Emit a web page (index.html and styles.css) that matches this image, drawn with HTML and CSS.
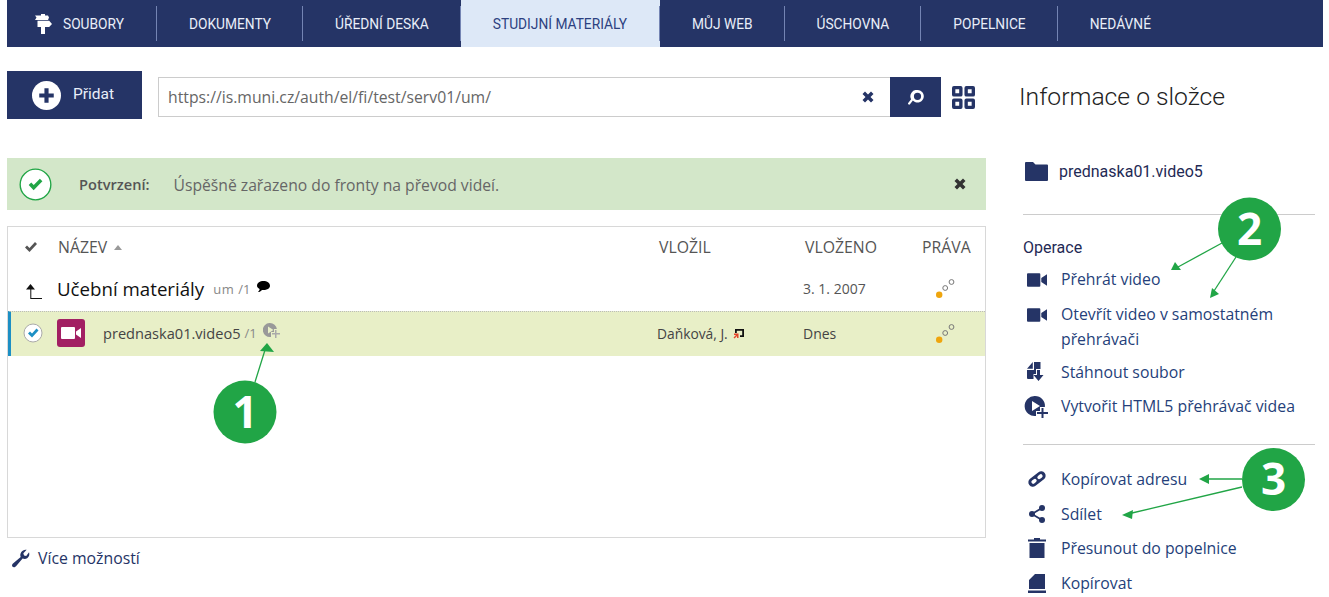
FILE: index.html
```html
<!DOCTYPE html>
<html lang="cs">
<head>
<meta charset="utf-8">
<title>Učební materiály</title>
<link rel="stylesheet" href="styles.css">
</head>
<body>
<div class="page">
  <nav class="nav">
    <a class="tab tab-first"><svg class="tab-icon" viewBox="0 0 17 20"><path d="M6 0h4v1.500h3l1 2-1 2.500H0L1.500 3.500 0 1.500h6zM2.500 6.800h11.700L17 10l-2.800 3H10v7H6v-7H2.500z"/></svg>SOUBORY</a>
    <a class="tab">DOKUMENTY</a>
    <a class="tab">ÚŘEDNÍ DESKA</a>
    <a class="tab tab-active">STUDIJNÍ MATERIÁLY</a>
    <a class="tab">MŮJ WEB</a>
    <a class="tab">ÚSCHOVNA</a>
    <a class="tab">POPELNICE</a>
    <a class="tab tab-last">NEDÁVNÉ</a>
  </nav>
  <div class="columns">
    <main class="main">
      <div class="toolbar">
        <button class="add"><svg class="add-icon" viewBox="0 0 28 28"><circle cx="14" cy="14" r="14" fill="#fff"/><path d="M12 7h4v5h5v4h-5v5h-4v-5H7v-4h5z" fill="#253466"/></svg>Přidat</button>
        <div class="search">
          <div class="url"><span>https://is.muni.cz/auth/el/fi/test/serv01/um/</span><svg class="x x-navy" viewBox="0 0 12 12"><path d="M3 .5 6 3.500 9 .5 11.500 3 8.500 6l3 3L9 11.500l-3-3-3 3L.5 9l3-3-3-3z"/></svg></div>
          <button class="go"><svg class="go-icon" viewBox="0 0 17 15"><path fill-rule="evenodd" d="M10.500 0a6.300 6.300 0 1 1-4.600 10.600L3 14.300c-.9 1-2.600-.3-1.800-1.400l2.900-3.700A6.300 6.300 0 0 1 10.500 0zm0 2.700a3.600 3.600 0 1 0 0 7.200 3.600 3.600 0 0 0 0-7.200z"/></svg></button>
          <svg class="grid-icon" viewBox="0 0 24 24"><path fill-rule="evenodd" d="M2 0h7a2 2 0 0 1 2 2v7a2 2 0 0 1-2 2H2a2 2 0 0 1-2-2V2a2 2 0 0 1 2-2zm1.500 3.500v4h4v-4zM15 0h7a2 2 0 0 1 2 2v7a2 2 0 0 1-2 2h-7a2 2 0 0 1-2-2V2a2 2 0 0 1 2-2zm1.500 3.500v4h4v-4zM2 13h7a2 2 0 0 1 2 2v7a2 2 0 0 1-2 2H2a2 2 0 0 1-2-2v-7a2 2 0 0 1 2-2zm1.500 3.500v4h4v-4zM15 13h7a2 2 0 0 1 2 2v7a2 2 0 0 1-2 2h-7a2 2 0 0 1-2-2v-7a2 2 0 0 1 2-2zm1.500 3.500v4h4v-4z"/></svg>
        </div>
      </div>

      <div class="alert">
        <svg class="alert-icon" viewBox="0 0 34 34"><circle cx="17" cy="17" r="15.800" fill="#fff" stroke="#21a546" stroke-width="1.400"/><path d="M10 17.500l2.600-2.600 2.600 2.600L21.500 11l2.600 2.600-9 9.400z" fill="#21a546"/></svg>
        <strong class="alert-label">Potvrzení:</strong>
        <span class="alert-text">Úspěšně zařazeno do fronty na převod videí.</span>
        <svg class="x x-dark" viewBox="0 0 12 12"><path d="M3 .5 6 3.500 9 .5 11.500 3 8.500 6l3 3L9 11.500l-3-3-3 3L.5 9l3-3-3-3z"/></svg>
      </div>

      <section class="table">
        <div class="row row-head">
          <span class="cell-check"><svg class="head-check" viewBox="0 0 12 10"><path d="M0 5.500 2 3.500l2.500 2.500L10 0l2 2-7.500 8z"/></svg></span>
          <span>NÁZEV <i class="sort"></i></span>
          <span class="head-date">VLOŽIL</span>
          <span class="head-date">VLOŽENO</span>
          <span>PRÁVA</span>
        </div>
        <div class="row row-parent">
          <span class="cell-check"><svg class="up-icon" viewBox="0 0 16 15"><path d="M4.500 0 9 5.500H5.300V14H16v1H4.300V5.500H0z"/></svg></span>
          <span class="name-cell"><b class="parent-name">Učební materiály</b><small class="meta meta-um">um</small><small class="meta">/1</small><svg class="bubble" viewBox="0 0 13 11"><path d="M6.500 0C10 0 13 2 13 4.800S10 9 6.500 9c-.6 0-1 0-1.500-.1C4 10 2.500 11 1 11c1-1 1.600-2 1.600-3C1 7.200 0 6 0 4.800 0 2 3 0 6.500 0z"/></svg></span>
          <span></span>
          <span class="cell-date">3. 1. 2007</span>
          <span class="cell-rights"><svg class="dots" viewBox="0 0 19 19"><circle cx="3.200" cy="15.800" r="3.200" fill="#efa50d"/><circle cx="9.200" cy="9" r="2.400" fill="none" stroke="#777"/><circle cx="15.500" cy="3" r="2.400" fill="none" stroke="#777"/></svg></span>
        </div>
        <div class="row row-file">
          <span class="cell-check"><svg class="file-check" viewBox="0 0 20 20"><circle cx="10" cy="10" r="9" fill="#fff" stroke="#aaa"/><path d="M5 10.500l2-2 2 2 4.500-5 2 2-6.500 7z" fill="#1c8fc4"/></svg></span>
          <span class="name-cell"><i class="file-type"><svg class="file-video" viewBox="0 0 20 12"><path d="M1 0h12a1 1 0 0 1 1 1v10a1 1 0 0 1-1 1H1a1 1 0 0 1-1-1V1a1 1 0 0 1 1-1zm14 4.500L20 1v10l-5-3.500z" fill="#fff"/></svg></i><span class="file-name">prednaska01.video5</span><small class="meta">/1</small><svg class="play-plus" viewBox="0 0 18 16"><path d="M7 0a7 7 0 0 1 6.900 6H11v3H8v4.900A7 7 0 1 1 7 0zM5 3.500v7L10.500 7z" fill="#999" fill-rule="evenodd"/><path d="M12 7h1.500v3H17v1.500h-3.500V15H12v-3.500H9V10h3z" fill="#aaa"/></svg></span>
          <span class="cell-author">Daňková, J. <svg class="person" viewBox="0 0 11 10"><path d="M2 0h9v8H7V6.200h2.200V1.800H3.800V4H2z" fill="#111"/><path d="M1 4.500h4.500V9H4V7L1.500 9.500.5 8.500 3 6H1z" fill="#e4452b"/></svg></span>
          <span class="cell-date">Dnes</span>
          <span class="cell-rights"><svg class="dots" viewBox="0 0 19 19"><circle cx="3.200" cy="15.800" r="3.200" fill="#efa50d"/><circle cx="9.200" cy="9" r="2.400" fill="none" stroke="#777"/><circle cx="15.500" cy="3" r="2.400" fill="none" stroke="#777"/></svg></span>
        </div>
      </section>

      <a class="more"><svg class="wrench" viewBox="0 0 20 20"><path d="M19 3.500c.8 2.500 0 5-2 6.200-1.500.9-3.300.9-4.800.2L5.500 17.800c-1.200 1.400-2.700 2-3.800 1s-.6-2.700.7-3.800l7.800-6.600c-.7-1.600-.5-3.500.5-5C12 1.200 14.300.3 16.500.8L13 4.500l.7 2.300 2.300.6z"/></svg>Více možností</a>
    </main>

    <aside class="aside">
      <h2 class="aside-title">Informace o složce</h2>
      <div class="folder"><svg class="folder-icon" viewBox="0 0 23 19"><path d="M1 0h7l2.500 2.500H22a1 1 0 0 1 1 1V18a1 1 0 0 1-1 1H1a1 1 0 0 1-1-1V1a1 1 0 0 1 1-1z"/></svg><span>prednaska01.video5</span></div>
      <hr class="rule">
      <h3 class="ops-title">Operace</h3>
      <ul class="ops">
        <li class="op"><svg class="op-icon" viewBox="0 0 21 14"><path d="M1 0h12a1 1 0 0 1 1 1v12a1 1 0 0 1-1 1H1a1 1 0 0 1-1-1V1a1 1 0 0 1 1-1zm14 5 6-4v12l-6-4z"/></svg><span>Přehrát video</span></li>
        <li class="op"><svg class="op-icon" viewBox="0 0 21 14"><path d="M1 0h12a1 1 0 0 1 1 1v12a1 1 0 0 1-1 1H1a1 1 0 0 1-1-1V1a1 1 0 0 1 1-1zm14 5 6-4v12l-6-4z"/></svg><span>Otevřít video v samostatném přehrávači</span></li>
        <li class="op"><svg class="op-icon op-doc" viewBox="0 0 18 20"><path d="M7 0h6.500v7H9v5H6.500v5H1a1 1 0 0 1-1-1V8h7zM0 6.800 5.800 0v6.800z"/><path d="M10 8h3v5h3.500L11.500 19 6.500 13H10z"/></svg><span>Stáhnout soubor</span></li>
        <li class="op"><svg class="op-icon op-icon-tall" viewBox="0 0 23 22"><path fill-rule="evenodd" d="M10 0a10 10 0 0 1 9.900 11H15v4h-4v4.900A10 10 0 1 1 10 0zM7 5v10l8-5z"/><path d="M16.500 12h2v4H23v2h-4.500v4h-2v-4H12v-2h4.500z"/></svg><span>Vytvořit HTML5 přehrávač videa</span></li>
      </ul>
      <hr class="rule rule-second">
      <ul class="ops ops-second">
        <li class="op"><svg class="op-icon op-link" viewBox="0 0 20 18"><g transform="rotate(-38 10 9)"><rect x="-1" y="4" width="22" height="10" rx="5"/><rect class="link-hole" x="2.500" y="7" width="6.500" height="4" rx="2"/><rect class="link-hole" x="11" y="7" width="6.500" height="4" rx="2"/></g></svg><span>Kopírovat adresu</span></li>
        <li class="op"><svg class="op-icon op-share" viewBox="0 0 16 18"><circle cx="13" cy="3" r="3"/><circle cx="3" cy="9" r="3"/><circle cx="13" cy="15" r="3"/><path d="M2.500 8.200 12.500 2.200l1 1.600L4.600 9l8.900 5.200-1 1.600-10-6z"/></svg><span>Sdílet</span></li>
        <li class="op"><svg class="op-icon op-trash" viewBox="0 0 18 20"><path d="M6 0h6v1.500h6v2H0v-2h6zM1.500 5h15v15h-15z"/></svg><span>Přesunout do popelnice</span></li>
        <li class="op"><svg class="op-icon op-copy" viewBox="0 0 18 19"><path d="M7 0h10v15H1V6zM0 16.500h18V19H0z"/></svg><span>Kopírovat</span></li>
      </ul>
    </aside>
  </div>
</div>

<svg class="notes" viewBox="0 0 1329 597">
  <g class="note-lines">
    <path d="M255 382 265 350"/>
    <path d="M1222 243 1178 267"/>
    <path d="M1236 257 1214 291"/>
    <path d="M1242 479H1208"/>
    <path d="M1242 487 1132 513"/>
  </g>
  <g class="note-fill">
    <path d="M267 343 274 352 260 351z"/>
    <path d="M1171 270 1175 262 1181 270z"/>
    <path d="M1210 298 1212 288 1219 294z"/>
    <path d="M1199 479 1209 474V484z"/>
    <path d="M1122 515 1133 510 1132 519z"/>
    <circle cx="245" cy="412" r="31.500"/>
    <circle cx="1249.500" cy="229" r="31.500"/>
    <circle cx="1273.500" cy="479.500" r="31.500"/>
  </g>
  <text class="note-num" x="245" y="428">1</text>
  <text class="note-num" x="1249.500" y="245">2</text>
  <text class="note-num" x="1273.500" y="495">3</text>
</svg>
</body>
</html>
```

FILE: styles.css
```css
* { box-sizing: border-box; }
html, body { margin: 0; height: 100%; overflow: hidden; background: #fff; }
body { position: relative; font-family: "Open Sans", sans-serif; color: #444; }
.page { padding: 0 6px 0 7px; }

.nav { display: flex; height: 47px; background: #253466; font-family: Roboto, sans-serif; font-size: 13.750px; }
.tab { position: relative; display: flex; align-items: center; padding: 0 32px; color: #e9eef9; white-space: nowrap; }
.tab::after { content: ""; position: absolute; right: 0; top: 6px; bottom: 6px; width: 1px; background: #7484b3; }
.tab-first { padding-left: 28px; padding-right: 33px; }
.tab-icon { width: 17px; height: 20px; margin-right: 11px; fill: #fff; }
.tab-active { padding-right: 33px; background: #dde8f7; color: #2c4180; }
.tab-last::after { display: none; }

.columns { display: flex; gap: 34px; margin-top: 24px; }
.main { width: 979px; flex: none; }

.toolbar { display: flex; align-items: flex-start; gap: 16px; height: 48px; }
.add { display: flex; align-items: center; width: 135px; height: 48px; padding: 0 0 2px 25px; border: 0; background: #253466; color: #e9eef9; font: 400 15.500px Roboto, sans-serif; }
.add-icon { width: 29px; height: 29px; margin: 2px 12px 0 0; }
.search { display: flex; align-items: center; margin-top: 6px; flex: 1; }
.url { display: flex; align-items: center; justify-content: space-between; width: 732px; height: 40px; padding: 0 16px 0 9px; border: 1px solid #ccc; border-right: 0; font-size: 15.750px; color: #666; }
.x { width: 12px; height: 12px; }
.x-navy { fill: #253466; }
.x-dark { fill: #333; margin-left: auto; }
.go { display: flex; align-items: center; justify-content: center; width: 51px; height: 40px; padding: 0; border: 0; background: #253466; }
.go-icon { width: 17px; height: 15px; fill: #fff; }
.grid-icon { width: 23px; height: 23px; margin-left: 11px; fill: #253466; }

.alert { display: flex; align-items: center; height: 52px; margin-top: 39px; padding: 0 20px 0 12px; background: #d3e7c9; }
.alert-icon { width: 33px; height: 33px; margin-right: 27px; }
.alert-label { font-size: 14.600px; font-weight: 600; color: #555; margin-right: 24px; }
.alert-text { font-size: 15.700px; color: #666; padding-top: 1px; }

.table { height: 312px; margin-top: 16px; border: 1px solid #d8d8d8; }
.row { display: grid; grid-template-columns: 50px 600px 146px 118px 1fr; align-items: center; font-size: 14px; }
.cell-check { display: flex; justify-content: center; padding-right: 5px; }
.row-head { height: 39px; font-size: 15.800px; color: #555; }
.head-date { padding-left: 1px; }
.head-check { width: 12px; height: 10px; fill: #555; }
.sort { display: inline-block; margin-left: 3px; border: 4px solid transparent; border-top: 0; border-bottom: 5px solid #999; vertical-align: 3px; }
.row-parent { height: 45px; color: #555; }
.up-icon { width: 16px; height: 15px; fill: #111; margin: 6px 0 0 6px; }
.name-cell { display: flex; align-items: center; }
.parent-name { font-size: 18.700px; font-weight: 500; color: #111; margin-left: -1px; }
.meta { font-size: 13px; color: #888; margin-left: 4px; }
.meta-um { margin-left: 9px; letter-spacing: .5px; }
.bubble { width: 13px; height: 11px; margin: -4px 0 0 7px; fill: #000; }
.cell-date { margin-left: -1px; font-size: 14px; }
.cell-rights { display: flex; padding-left: 14px; }
.dots { width: 19px; height: 19px; }
.row-file { height: 45px; padding-bottom: 2px; background: #e8efc7; border-top: 1px dotted #bbb; border-left: 3px solid #1c8fc4; grid-template-columns: 46px 601px 146px 118px 1fr; }
.row-file .cell-check { padding-right: 3px; }
.file-check { width: 20px; height: 20px; }
.file-type { display: flex; align-items: center; justify-content: center; width: 28px; height: 28px; margin-right: 18px; border-radius: 3px; background: #a21f63; }
.file-video { width: 20px; height: 12px; }
.file-name { font-size: 14.600px; color: #444; }
.play-plus { width: 18px; height: 16px; margin: -4px 0 0 6px; }
.cell-author { font-size: 13.800px; margin-left: -1px; }
.person { width: 11px; height: 10px; margin-left: 2px; }

.more { display: flex; align-items: center; margin: 9px 0 0 4px; color: #253466; font-size: 15.800px; }
.wrench { width: 19px; height: 19px; margin-right: 8px; fill: #253466; }

.aside { width: 295px; flex: none; }
.aside-title { margin: 0 0 0 -1px; height: 50px; font: 300 24.700px/52px Roboto, sans-serif; color: #222; }
.folder { display: flex; align-items: center; height: 26px; margin: 37px 0 0 5px; font: 400 16px Roboto, sans-serif; color: #1f2a55; }
.folder-icon { width: 23px; height: 19px; margin-right: 11px; fill: #253466; }
.rule { height: 1px; margin: 30px 0 0 3px; border: 0; background: #ccc; }
.ops-title { margin: 24px 0 0 3px; font: 400 16px/18px Roboto, sans-serif; color: #1f2a55; }
.ops { list-style: none; margin: 5px 0 0 3px; padding: 0; }
.op { display: flex; align-items: flex-start; padding: 5px 0 4px; color: #253f7a; font-size: 15.800px; line-height: 25px; }
.op:first-child { padding-bottom: 5px; }
.op:nth-child(2) { padding-bottom: 4px; line-height: 24.500px; }
.op-icon { flex: none; width: 20px; height: 14px; margin: 6px 14px 0 4px; fill: #253466; overflow: visible; }
.op-doc { width: 18px; height: 20px; margin: 2px 16px 0 4px; }
.op-icon-tall { width: 23px; height: 22px; margin: 2px 13px 0 2px; }
.rule-second { margin-top: 21px; }
.ops-second { margin-top: 17px; }
.ops-second .op { padding-bottom: 4.500px; line-height: 25px; }
.op-link { width: 18px; height: 16px; margin: 4px 15px 0 5px; }
.op-share { width: 16px; height: 18px; margin: 3px 16px 0 6px; }
.op-trash { width: 18px; height: 20px; margin: 2px 15px 0 5px; }
.op-copy { width: 18px; height: 19px; margin: 3px 15px 0 5px; }
.link-hole { fill: #fff; }

.notes { position: absolute; left: 0; top: 0; width: 1329px; height: 597px; pointer-events: none; }
.note-lines { fill: none; stroke: #21a546; stroke-width: 1.300; }
.note-fill { fill: #21a546; }
.note-num { fill: #fff; font: 700 44px "Open Sans", sans-serif; text-anchor: middle; }
```
